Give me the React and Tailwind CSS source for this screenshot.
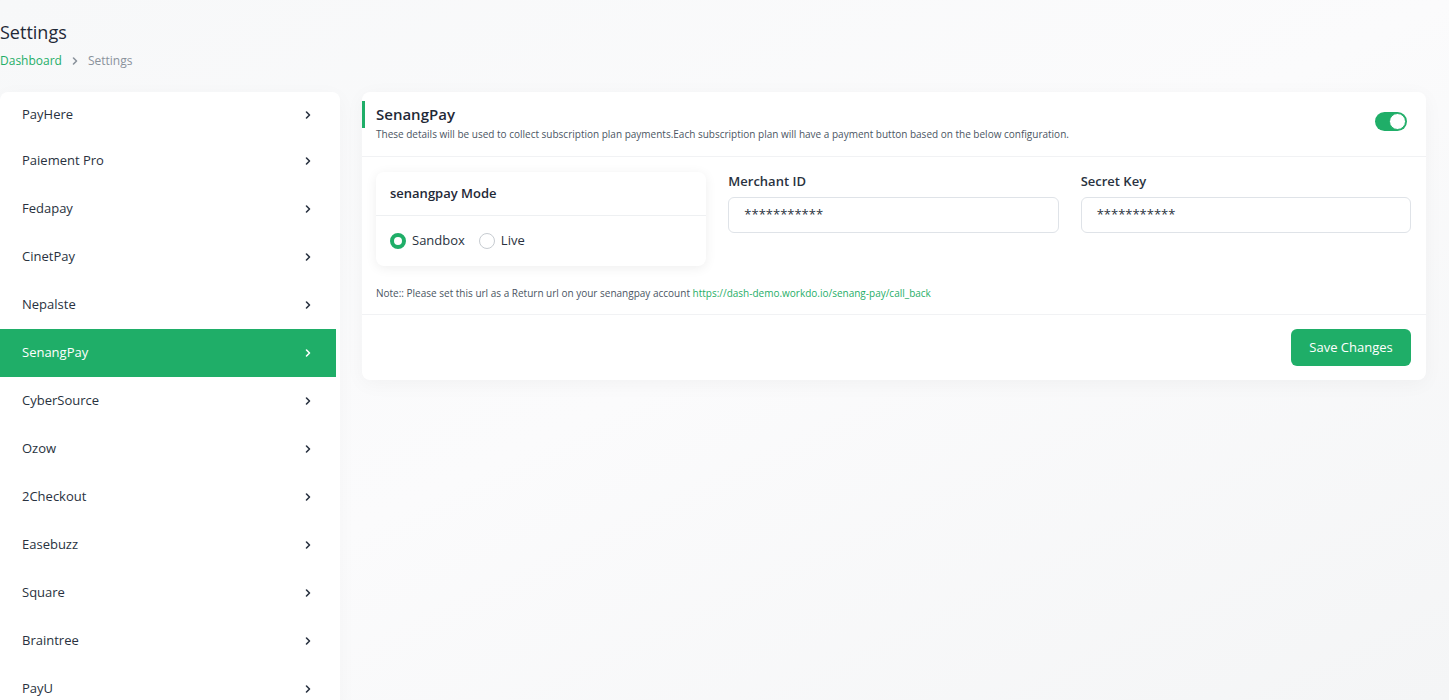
import React from "react";

const items = [
  "PayHere",
  "Paiement Pro",
  "Fedapay",
  "CinetPay",
  "Nepalste",
  "SenangPay",
  "CyberSource",
  "Ozow",
  "2Checkout",
  "Easebuzz",
  "Square",
  "Braintree",
  "PayU",
];

function Chevron({ className }) {
  return (
    <svg width="10" height="10" viewBox="0 0 10 10" className={className} fill="none">
      <path d="M3.5 2 L6.5 5 L3.5 8" stroke="currentColor" strokeWidth="1.6" strokeLinecap="round" strokeLinejoin="round" />
    </svg>
  );
}

export default function App() {
  return (
    <div
      className="min-h-[700px] h-[700px] overflow-hidden bg-gradient-to-br from-[#f7f8f9] via-[#fbfbfc] to-[#f4f5f6] text-[#293240]"
      style={{ fontFamily: '"Open Sans", "Noto Sans", sans-serif' }}
    >
      <div className="pt-[20px]">
        <h1 className="text-[18px] leading-[24px] font-medium text-[#1f2937]">Settings</h1>
        <div className="mt-[9px] flex items-center text-[12px] leading-[16px]">
          <span className="text-[#1fae68]">Dashboard</span>
          <Chevron className="mx-[8px] text-[#8a929c]" />
          <span className="text-[#8a929c]">Settings</span>
        </div>
      </div>

      <div className="mt-[23px] flex items-start gap-[22px]">
        <div className="w-[340px] shrink-0 rounded-[8px] bg-white pr-[4px] shadow-[0_4px_20px_rgba(0,0,0,0.03)]">
          {items.map((name, i) => {
            const active = name === "SenangPay";
            return (
              <div
                key={name}
                className={
                  "flex items-center justify-between pl-[22px] pr-[23px] text-[13px] " +
                  (i === 0 ? "h-[45px] rounded-tl-[8px] " : "h-[48px] ") +
                  (active ? "bg-[#1fae68] text-white" : "text-[#293240]")
                }
              >
                <span>{name}</span>
                <Chevron className={active ? "text-white" : "text-[#293240]"} />
              </div>
            );
          })}
        </div>

        <div className="w-[1064px] shrink-0 rounded-[8px] bg-white shadow-[0_4px_20px_rgba(0,0,0,0.04)]">
          <div className="flex items-center justify-between border-b border-[#f1f2f4] pt-[9px] pb-[15px] pr-[19px]">
            <div className="relative pl-[14px]">
              <div className="absolute left-0 top-[0px] h-[27px] w-[3px] bg-[#1fae68]" />
              <div className="text-[15px] leading-[26px] font-semibold text-[#1f2937]">SenangPay</div>
              <div className="text-[10px] leading-[14px] text-[#4b5563]">
                These details will be used to collect subscription plan payments.Each subscription plan will have a payment button based on the below configuration.
              </div>
            </div>
            <div className="relative h-[19px] w-[32px] rounded-full bg-[#1fae68]">
              <div className="absolute right-[1px] top-[1px] h-[17px] w-[17px] rounded-full border border-[#1fae68] bg-white" />
            </div>
          </div>

          <div className="px-[14px] pr-[15px] pt-[15px]">
            <div className="grid grid-cols-3 gap-x-[22px]">
              <div className="rounded-[8px] bg-white shadow-[0_2px_12px_rgba(0,0,0,0.07)]">
                <div className="flex h-[44px] items-center border-b border-[#eef0f2] px-[14px] text-[13px] font-semibold text-[#1f2937]">
                  senangpay Mode
                </div>
                <div className="flex h-[50px] items-center px-[14px] text-[13px] text-[#293240]">
                  <span className="h-[16px] w-[16px] rounded-full border-[4.5px] border-[#1fae68] bg-white" />
                  <span className="ml-[6px]">Sandbox</span>
                  <span className="ml-[14px] h-[16px] w-[16px] rounded-full border border-[#c7ccd1] bg-white" />
                  <span className="ml-[6px]">Live</span>
                </div>
              </div>
              <div>
                <div className="text-[13px] leading-[18px] font-semibold text-[#293240]">Merchant ID</div>
                <div className="mt-[7px] flex h-[36px] items-center rounded-[6px] border border-[#dfe3e8] px-[15px] text-[13px] text-[#293240]">
                  ***********
                </div>
              </div>
              <div>
                <div className="text-[13px] leading-[18px] font-semibold text-[#293240]">Secret Key</div>
                <div className="mt-[7px] flex h-[36px] items-center rounded-[6px] border border-[#dfe3e8] px-[15px] text-[13px] text-[#293240]">
                  ***********
                </div>
              </div>
            </div>
            <div className="mt-[20px] pb-[14px] text-[10px] leading-[14px] text-[#4b5563]">
              Note:: Please set this url as a Return url on your senangpay account{" "}
              <span className="text-[#1fae68]">https://dash-demo.workdo.io/senang-pay/call_back</span>
            </div>
          </div>

          <div className="flex justify-end border-t border-[#f1f2f4] px-[15px] py-[14px]">
            <button className="h-[37px] w-[120px] rounded-[6px] bg-[#1fae68] text-[13px] text-white">
              Save Changes
            </button>
          </div>
        </div>
      </div>
    </div>
  );
}
